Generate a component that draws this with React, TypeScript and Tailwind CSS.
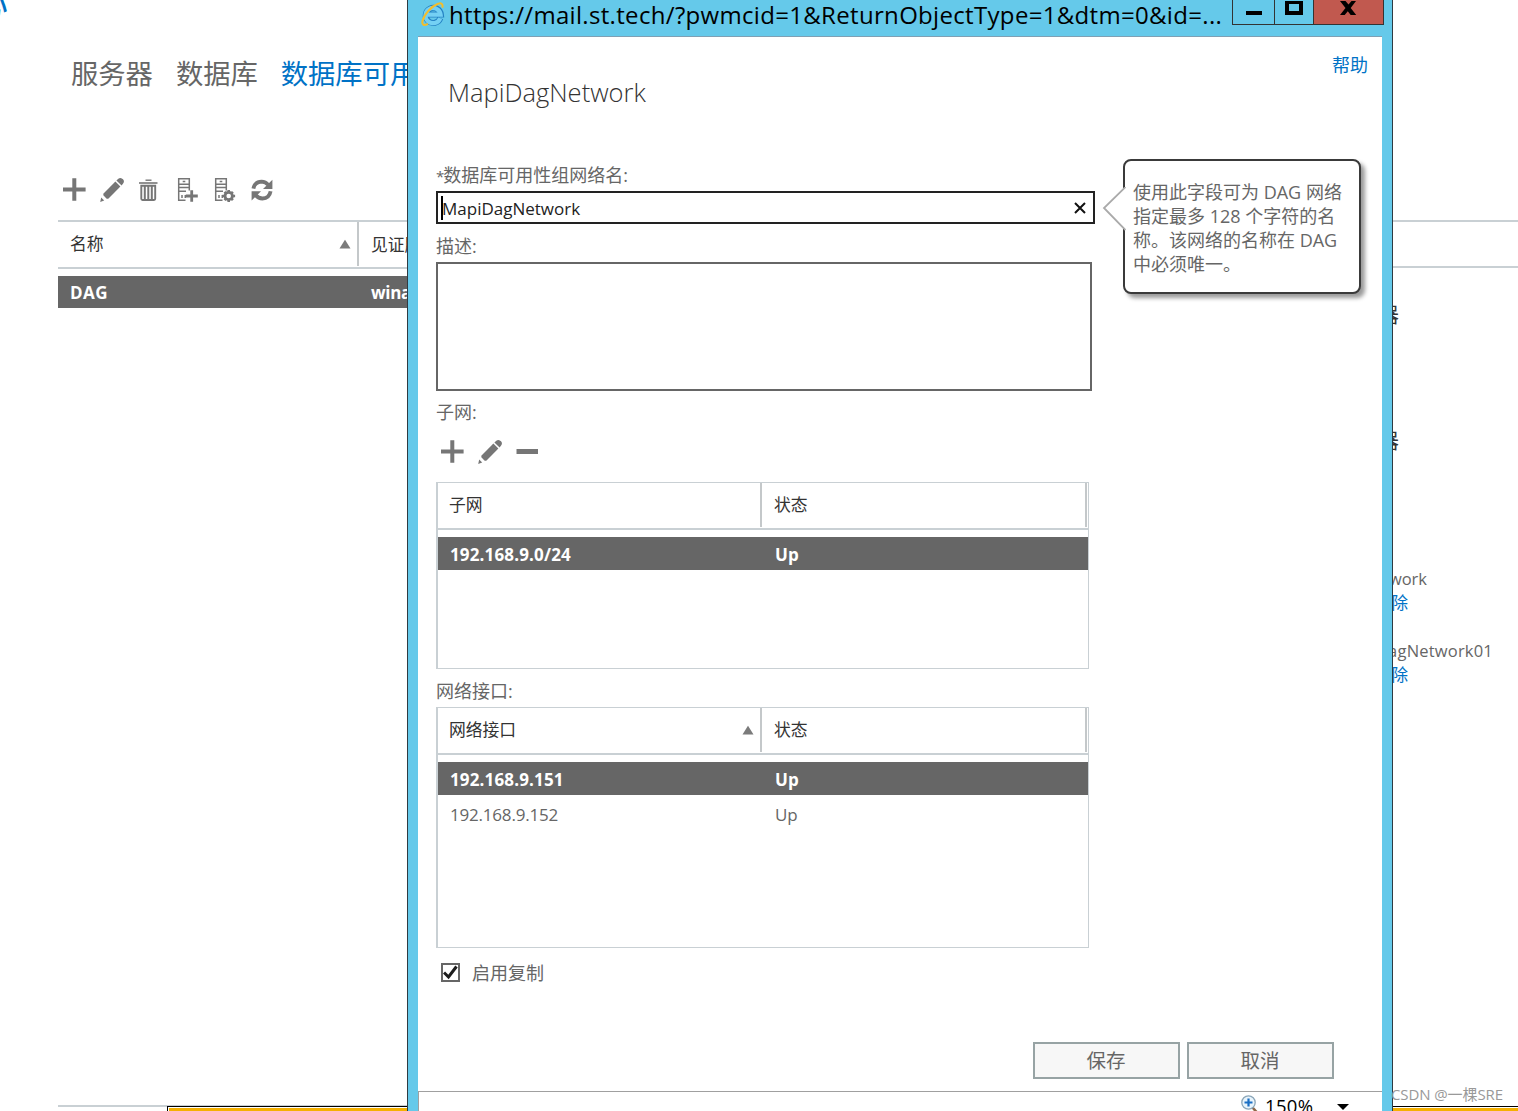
import { ReactNode } from "react";
import clsx from "clsx";

const PlusIcon = () => (
  <svg width="24" height="24" viewBox="0 0 24 24" fill="#767676">
    <path d="M10.3 0.3h4v9.2h9.3v4h-9.3v9.3h-4v-9.3H1V9.500h9.3z" />
  </svg>
);

const PencilIcon = () => (
  <svg width="24" height="24" viewBox="0 0 24 24" fill="#767676">
    <path d="M15.4 3.6l5 5L8.8 20.200q-1.200 1-2.400.2L3.600 17.600q-.8-1.200.2-2.400z" />
    <path d="M16.4 2.4l1.900-1.6q1.3-1 3-.6 2.2.7 2.6 2.6.2 1.6-.8 2.8L21.600 7.400z" />
    <path d="M1.200 19.600l3 3L.2 24z" />
  </svg>
);

const MinusIcon = () => (
  <svg width="24" height="24" viewBox="0 0 24 24" fill="#767676">
    <path d="M.5 9h21.5v5H.5z" />
  </svg>
);

const TrashIcon = () => (
  <svg width="24" height="24" viewBox="0 0 24 24" fill="none" stroke="#767676">
    <path d="M7.500 2.200h6" strokeWidth="1.400" />
    <path d="M1 5h18.500" strokeWidth="1.600" />
    <path d="M3.300 7.800v13q0 1.200 1.200 1.200h11.500q1.200 0 1.200-1.200v-13z" strokeWidth="1.900" />
    <path d="M6.800 8v13.500M10.300 8v13.500M13.800 8v13.500" strokeWidth="2" />
  </svg>
);

const ServerShape = () => (
  <>
    <path d="M2.700.8h10.600v8.800H2.700zM2.700 6.300h10.600M2.700 9.600v12.600h6.800M2.700 13.300h7.300M13.300 9v3.600" strokeWidth="1.500" />
    <path d="M6.700 3.500h2.600M6 17v3M9.300 17v3" strokeWidth="1.500" />
  </>
);

const ServerAddIcon = () => (
  <svg width="24" height="24" viewBox="0 0 24 24" fill="none" stroke="#767676">
    <ServerShape />
    <path d="M15.700 12.200v11.600M9.800 18h12" strokeWidth="2.800" />
  </svg>
);

const ServerGearIcon = () => (
  <svg width="24" height="24" viewBox="0 0 24 24" fill="none" stroke="#767676">
    <g transform="translate(-1 0)">
      <ServerShape />
    </g>
    <circle cx="14.700" cy="18" r="3.700" strokeWidth="2.800" />
    <path
      d="M14.700 12v2M14.700 22v2M8.300 18h2M19.100 18h2M10.500 13.800l1.500 1.500M17.400 20.700l1.500 1.500M18.900 13.800l-1.500 1.500M12 20.700l-1.500 1.500"
      strokeWidth="2.600"
    />
  </svg>
);

const RefreshIcon = () => (
  <svg width="24" height="24" viewBox="0 0 24 24" fill="none" stroke="#767676">
    <path d="M2.4 10.6Q3.6 4 10.6 3.7q4 0 6.6 3.2" strokeWidth="3.8" />
    <path d="M19.6 13.2q-1.2 7-8.2 7.3-4 0-6.6-3.2" strokeWidth="3.8" />
    <path d="M21.4 1.8v9.200h-9.400zM.6 22.600v-9.400h9.400z" fill="#767676" stroke="none" />
  </svg>
);

const SortIcon = () => (
  <svg width="12" height="10" viewBox="0 0 12 10" fill="#7b7b7b">
    <path d="M6 .8L11.5 9.5H.5z" />
  </svg>
);

const BrowserIcon = () => (
  <svg width="24" height="26" viewBox="0 0 24 26" fill="none">
    <path d="M19.400 17.200a7.600 7.600 0 1 1 .5-3.600H6.600" stroke="#2583c4" strokeWidth="6" />
    <path d="M19.200 17.200a7.600 7.600 0 1 1 .4-3.600H6.600" stroke="#74d0f4" strokeWidth="4.200" />
    <path
      d="M21.300 6.600C22.300 3.200 20.400 1.400 17 2.800 10.500 5.200 3 13.500 1.500 20c-.9 4 1.500 5 5.500 2.800"
      stroke="#f3bd2c"
      strokeWidth="2"
    />
  </svg>
);

const ZoomIcon = () => (
  <svg width="18" height="20" viewBox="0 0 18 20" fill="none">
    <path d="M11.5 12.5l4.5 5" stroke="#8d6748" strokeWidth="2.6" />
    <circle cx="7.5" cy="7.5" r="6.7" fill="#e8f4fc" stroke="#8ba6b8" strokeWidth="1.3" />
    <path d="M7.5 3.5v8M3.5 7.5h8" stroke="#1b6fc4" strokeWidth="2.2" />
  </svg>
);

type Row = { name: string; status: string; selected?: boolean };

const GridTable = ({
  title,
  rows,
  sorted,
  className,
}: {
  title: string;
  rows: Row[];
  sorted?: boolean;
  className: string;
}) => (
  <div
    className={clsx(
      "w-[653px] border border-l-2 border-[#c9d0d4] text-[16.8px]",
      className,
    )}
  >
    <div className="flex h-[47px] border-b-2 border-[#c9d0d4] pr-px text-[#333]">
      <div className="mb-px flex w-[324px] items-center justify-between border-r-2 border-[#c4c8ca] pr-[6px] pl-[11px]">
        <span>{title}</span>
        {sorted && <SortIcon />}
      </div>
      <div className="mb-px flex flex-1 items-center border-r-2 border-[#c4c8ca] pl-3">
        状态
      </div>
    </div>
    <div className="pt-[7px]">
      {rows.map((row) => (
        <div
          key={row.name}
          className={clsx(
            "mb-[2px] flex h-[33px] items-center pt-[2px] pl-3 text-[17px]",
            row.selected
              ? "bg-[#666] font-bold tracking-[0.15px] text-white"
              : "tracking-[-0.2px] text-[#666]",
          )}
        >
          <span className="w-[325px]">{row.name}</span>
          <span>{row.status}</span>
        </div>
      ))}
    </div>
  </div>
);

const FormLabel = ({ children, className }: { children: ReactNode; className?: string }) => (
  <div className={clsx("h-6 text-[18px] leading-6 text-[#666]", className)}>{children}</div>
);

const Tooltip = () => (
  <div className="absolute top-[122px] left-[705px] h-[135px] w-[238px] rounded-lg border-2 border-[#3a3a3a] bg-white pt-[19px] pl-2 text-[18px] leading-6 whitespace-nowrap text-[#666] shadow-[4px_4px_4px_rgba(0,0,0,0.4)]">
    <svg
      className="absolute top-[26px] -left-[23px]"
      width="24"
      height="44"
      viewBox="0 0 24 44"
    >
      <path d="M23.5 0L2 21l21.5 22" fill="#fff" stroke="#aaa" strokeWidth="1.8" />
    </svg>
    <p>使用此字段可为 DAG 网络</p>
    <p>指定最多 128 个字符的名</p>
    <p>称。该网络的名称在 DAG</p>
    <p>中必须唯一。</p>
  </div>
);

const ServerPage = () => (
  <div className="flex h-full">
    <div className="relative w-[407px] overflow-hidden pl-[58px]">
      <span className="absolute -top-[19px] -left-[28px] text-[36px] leading-[44px] text-[#0072c6]">
        心
      </span>
      <div className="mt-14 flex h-9 gap-[23px] pl-[13px] text-[27.3px] leading-9 whitespace-nowrap text-[#666]">
        <span>服务器</span>
        <span>数据库</span>
        <span className="text-[#0072c6]">数据库可用性组</span>
      </div>
      <div className="mt-[86px] flex gap-[14px] pl-1">
        <PlusIcon />
        <PencilIcon />
        <TrashIcon />
        <ServerAddIcon />
        <ServerGearIcon />
        <div className="-ml-px">
          <RefreshIcon />
        </div>
      </div>
      <div className="mt-[18px] flex h-[49px] border-y-2 border-[#c9d0d4] text-[16.8px] whitespace-nowrap text-[#333]">
        <div className="mb-px flex w-[301px] shrink-0 items-center justify-between border-r-2 border-[#c4c8ca] pr-[6px] pl-3">
          <span>名称</span>
          <SortIcon />
        </div>
        <div className="flex items-center pl-3">见证服务器</div>
      </div>
      <div className="mt-[7px] flex h-8 items-center bg-[#666] pt-[2px] pl-3 text-[17px] font-bold whitespace-nowrap text-white">
        <span className="w-[301px] shrink-0 tracking-[0.5px]">DAG</span>
        <span className="tracking-[-0.3px]">winad</span>
      </div>
      <div className="mt-[797px] h-[2px] bg-[#c9d0d4]" />
      <div className="absolute bottom-0 left-[167px] h-[5px] w-[240px] border-t border-l border-black bg-white pt-px pl-px">
        <div className="h-full bg-[#f5b000]" />
      </div>
    </div>

    <div className="ml-[986px] flex w-[125px] shrink-0 flex-col text-[16.5px] leading-6 whitespace-nowrap">
      <div className="mt-[220px] h-12 border-y-2 border-[#c9d0d4]" />
      <div className="mt-[34px] flex w-[6px] justify-end text-[21px] text-[#333]">服务器</div>
      <div className="mt-[102px] flex w-[6px] justify-end text-[21px] text-[#333]">服务器</div>
      <div className="mt-[115px] flex w-[34px] justify-end text-[#666]">MapiDagNetwork</div>
      <div className="flex w-[15px] justify-end text-[#0072c6]">删除</div>
      <div className="mt-6 flex w-[100px] justify-end tracking-[0.2px] text-[#666]">DagNetwork01</div>
      <div className="flex w-[15px] justify-end text-[#0072c6]">删除</div>
      <div className="mt-auto h-[5px] border-t border-black bg-white pt-px">
        <div className="h-full bg-[#f5b000]" />
      </div>
    </div>
  </div>
);

const TitleBar = () => (
  <div className="flex h-9 items-start pl-[13px]">
    <div className="mt-px">
      <BrowserIcon />
    </div>
    <div className="ml-1 w-[783px] text-[24px] leading-[29px] tracking-[0.32px] whitespace-nowrap text-black">
      https://mail.st.tech/?pwmcid=1&amp;ReturnObjectType=1&amp;dtm=0&amp;id=...
    </div>
    <div className="flex h-[25px] w-[152px] border-x border-b border-[#333]">
      <div className="flex w-[42px] justify-center border-r border-[#333] pt-[11px]">
        <div className="h-1 w-4 bg-black" />
      </div>
      <div className="flex w-[39px] justify-center border-r border-[#333] pt-px">
        <div className="h-[14px] w-[18px] border-4 border-t-[3px] border-black" />
      </div>
      <div className="flex flex-1 justify-center bg-[#c1594f] pt-px pr-[2px]">
        <svg width="18" height="14" viewBox="0 0 18 14">
          <path d="M1 0h5.500l3 3.600L12.500 0H17l-5.300 7 5.500 7h-5.500L8.800 10.200 5.700 14H1l5.500-7z" />
        </svg>
      </div>
    </div>
  </div>
);

const NetworkDialog = () => (
  <div className="absolute top-0 left-[407px] flex h-full w-[986px] flex-col border-x border-[#2f3b42] bg-[#65c9ea]">
    <TitleBar />
    <div className="relative mx-[10px] flex flex-1 flex-col border-t border-[#7fa0b4] bg-white">
      <div className="flex h-[126px] justify-between pr-[14px] pl-[30px]">
        <h1 className="pt-[37px] text-[25.5px] leading-9 font-light text-[#333]">
          MapiDagNetwork
        </h1>
        <a className="pt-4 text-[18px] leading-6 text-[#0072c6]">帮助</a>
      </div>
      <div className="pl-[18px]">
        <FormLabel>
          <span className="-mr-px text-[15px]">*</span>数据库可用性组网络名:
        </FormLabel>
        <div className="mt-1 flex h-[33px] w-[659px] items-center justify-between border-2 border-[#222] pr-[7px] pl-[3px] text-[17px] text-[#222]">
          <div className="flex items-center leading-6">
            <span className="-mr-px h-6 w-[2px] bg-black" />
            <span className="pt-[2px]">MapiDagNetwork</span>
          </div>
          <svg width="12" height="12" viewBox="0 0 12 12" stroke="#111" strokeWidth="2">
            <path d="M1 1l10 10M11 1L1 11" />
          </svg>
        </div>
        <FormLabel className="mt-[10px]">描述:</FormLabel>
        <div className="mt-1 h-[129px] w-[656px] border-2 border-[#666]" />
        <FormLabel className="mt-[9px]">子网:</FormLabel>
        <div className="mt-4 flex gap-[14px] pl-1">
          <PlusIcon />
          <PencilIcon />
          <MinusIcon />
        </div>
        <GridTable
          className="mt-[18px] h-[187px]"
          title="子网"
          rows={[{ name: "192.168.9.0/24", status: "Up", selected: true }]}
        />
        <FormLabel className="mt-[10px]">网络接口:</FormLabel>
        <GridTable
          className="mt-1 h-[241px]"
          title="网络接口"
          sorted
          rows={[
            { name: "192.168.9.151", status: "Up", selected: true },
            { name: "192.168.9.152", status: "Up" },
          ]}
        />
        <div className="mt-3 flex h-6 items-center pl-[5px] text-[18px] leading-6 text-[#666]">
          <div className="mr-3 flex h-[19px] w-[19px] items-center justify-center border-2 border-[#666]">
            <svg width="15" height="15" viewBox="0 0 15 15" fill="none" stroke="#1c1c1c" strokeWidth="3">
              <path d="M1 7.500l4.500 4.500L13.500 1.500" />
            </svg>
          </div>
          <span className="pt-[2px]">启用复制</span>
        </div>
      </div>
      <div className="mt-[58px] flex gap-[7px] pl-[615px] text-[19.5px] text-[#666]">
        <button className="h-[37px] w-[147px] border-2 border-[#97a3a4] bg-[#f7f7f7] pr-px leading-8">保存</button>
        <button className="h-[37px] w-[147px] border-2 border-[#97a3a4] bg-[#f7f7f7] pr-px leading-8">取消</button>
      </div>
      <div className="mt-3 flex h-5 items-start border-t border-l border-[#a0a0a0] pl-[822px]">
        <div className="mt-[3px]">
          <ZoomIcon />
        </div>
        <span className="ml-[6px] h-5 w-[72px] text-[18.5px] leading-7 tracking-[0.3px] text-black">
          150%
        </span>
        <svg className="mt-3" width="12" height="6" viewBox="0 0 12 6">
          <path d="M0 0h12L6 6z" />
        </svg>
      </div>
      <Tooltip />
    </div>
  </div>
);

const App = () => {
  return (
    <div className="relative h-[1111px] w-[1518px] overflow-hidden bg-white font-['Open_Sans','Noto_Sans_CJK_SC',sans-serif]">
      <ServerPage />
      <NetworkDialog />
      <span className="absolute top-[1083px] left-[1391px] text-[15px] leading-[22px] tracking-[-0.1px] whitespace-nowrap text-[#999]">
        CSDN @一棵SRE
      </span>
    </div>
  );
};

export default App;
